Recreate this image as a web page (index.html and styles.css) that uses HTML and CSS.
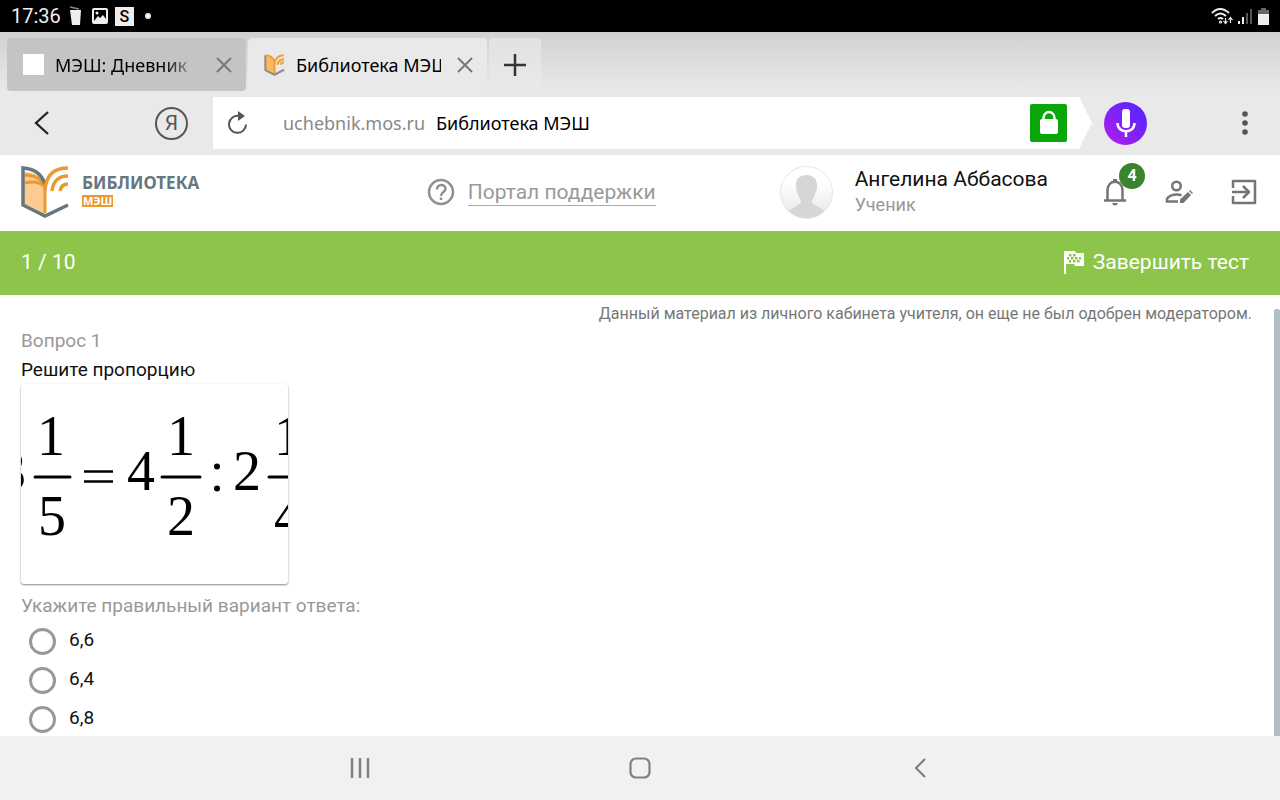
FILE: index.html
```html
<!DOCTYPE html>
<html lang="ru">
	<head>

		<meta charset="UTF-8">
		<meta name="viewport" content="width=device-width, initial-scale=1">
		<title>Библиотека МЭШ</title>

		<link rel="stylesheet" href="styles.css">

	</head>
	<body>

		<!-- status bar -->
		<div class="status">
			<span class="status-time">17:36</span>
			<svg class="status-cup" width="14" height="20" viewBox="0 0 14 20">
				<path d="M1 4 L12 4 L11 19 L3 19 Z" fill="#eee"/>
				<path d="M1 1 L10 3" stroke="#888" stroke-width="1.5"/>
			</svg>
			<svg class="status-picture" width="16" height="16" viewBox="0 0 16 16">
				<rect x="1" y="1" width="14" height="14" rx="1" fill="none" stroke="#eee" stroke-width="2"/>
				<path d="M2 13 L6 8 L8 10 L11 7 L14 11 V14 H2 Z" fill="#eee"/>
				<circle cx="5" cy="5" r="1.5" fill="#eee"/>
			</svg>
			<span class="status-s">S</span>
			<span class="status-dot"></span>
			<svg class="status-wifi" width="22" height="18" viewBox="0 0 22 18" fill="none" stroke="#eee" stroke-width="2">
				<path d="M1 6 Q9 -2 18 6"/>
				<path d="M4 9 Q9.500 4 15 9"/>
				<path d="M7 12 Q9.500 10 12 12"/>
				<circle cx="9.500" cy="15" r="0.600"/>
				<path d="M14.500 11 V16 M12.500 14 L14.500 16.500 L16.500 14 M19.500 16 V11 M17.500 13 L19.500 10.500 L21.500 13" stroke-width="1.200"/>
			</svg>
			<svg class="status-signal" width="15" height="16" viewBox="0 0 15 16">
				<path d="M1 13h2v3h-2z M5 9h2v7h-2z" fill="#eee"/>
				<path d="M9 5h2v11h-2z M13 1h2v15h-2z" fill="#555"/>
			</svg>
			<svg width="11" height="17" viewBox="0 0 11 17">
				<path d="M3 0h5v2h3v4H0V2h3z" fill="#666"/>
				<rect y="6" width="11" height="11" fill="#eee"/>
			</svg>
		</div>

		<!-- browser -->
		<div class="browser">
			<div class="tabs">
				<div class="tab">
					<span class="tab-icon"></span>
					<span class="tab-title tab-fade">МЭШ: Дневник</span>
					<button class="tab-close" aria-label="Закрыть">
						<svg width="16" height="16" viewBox="0 0 16 16"><path d="M1 1 L15 15 M15 1 L1 15" stroke="#777" stroke-width="2"/></svg>
					</button>
				</div>
				<div class="tab tab-active">
					<svg class="tab-logo" width="21" height="22" viewBox="0 0 48 53">
						<path d="M3 4 C14 6 20 10 24 19 V47 L3 38 Z" fill="#fdb95f"/>
						<path d="M2 3 V39 L24 50 L47 38" fill="none" stroke="#8f8f86" stroke-width="5"/>
						<path d="M2 3 C14 3 21 9 24 19 V46 M24 24 C26 10 34 3 47 3 M31 26 C33 17 38 13 47 13 M39 26 C40 22 43 20 47 20" fill="none" stroke="#f3a032" stroke-width="5"/>
					</svg>
					<span class="tab-title">Библиотека МЭШ</span>
					<button class="tab-close" aria-label="Закрыть">
						<svg width="16" height="16" viewBox="0 0 16 16"><path d="M1 1 L15 15 M15 1 L1 15" stroke="#777" stroke-width="2"/></svg>
					</button>
				</div>
				<button class="tab-new" aria-label="Новая вкладка">
					<svg width="22" height="22" viewBox="0 0 22 22"><path d="M11 0 V22 M0 11 H22" stroke="#333" stroke-width="2.500"/></svg>
				</button>
			</div>

			<div class="toolbar">
				<button class="back" aria-label="Назад">
					<svg width="16" height="24" viewBox="0 0 16 24"><path d="M14 1 L2 12 L14 23" fill="none" stroke="#222" stroke-width="2.300"/></svg>
				</button>
				<button class="yandex" aria-label="Яндекс">Я</button>
				<div class="address">
					<button class="reload" aria-label="Обновить">
						<svg width="20" height="24" viewBox="0 0 20 24">
							<path d="M11 5 A8.500 8.500 0 1 0 18 13.500" fill="none" stroke="#555" stroke-width="2"/>
							<path d="M10 0 L17 5 L10 10 Z" fill="#555"/>
						</svg>
					</button>
					<button class="url"><span class="url-host">uchebnik.mos.ru</span>Библиотека МЭШ</button>
					<button class="lock" aria-label="Защищено">
						<svg width="20" height="26" viewBox="0 0 20 26">
							<rect x="1" y="9" width="18" height="15" rx="2" fill="#fff"/>
							<path d="M4.500 10 V8 A5.500 6 0 0 1 15.500 8 V10" fill="none" stroke="#fff" stroke-width="2.500"/>
						</svg>
					</button>
				</div>
				<button class="mic" aria-label="Голосовой поиск">
					<svg width="20" height="30" viewBox="0 0 20 30">
						<rect x="6" y="1" width="8" height="19" rx="3" fill="#fff"/>
						<path d="M1.500 15 C1.500 26 18.500 26 18.500 15 M10 23 V29" fill="none" stroke="#fff" stroke-width="2.500"/>
					</svg>
				</button>
				<button class="more" aria-label="Меню">
					<svg width="6" height="26" viewBox="0 0 6 26" fill="#555"><circle cx="3" cy="4" r="2.800"/><circle cx="3" cy="13" r="2.800"/><circle cx="3" cy="22" r="2.800"/></svg>
				</button>
			</div>
		</div>

		<!-- site header -->
		<header class="header">
			<a class="logo" href="#">
				<svg width="48" height="53" viewBox="0 0 48 53">
					<path d="M3 6 C14 6 20 10 24 19 V48 L3 38 Z" fill="#fbcb92"/>
					<path d="M4 9 C13 9 20 12 24 20 M4 17 C12 15 19 16 24 21 V47" fill="none" stroke="#ec9830" stroke-width="3"/>
					<path d="M24 18 C20 7 13 3 2 2 V39 L24 50 L47 39" fill="none" stroke="#66777d" stroke-width="3.500"/>
					<path d="M24 24 C25 10 32 2 47 2 M31 25 C32 15 38 10 47 10 M39 25 C40 20 43 18 47 18" fill="none" stroke="#ec9830" stroke-width="3.500"/>
				</svg>
				<span class="logo-text">
					<span class="logo-name">БИБЛИОТЕКА</span>
					<span class="logo-badge">МЭШ</span>
				</span>
			</a>
			<a class="help" href="#">
				<svg width="28" height="28" viewBox="0 0 28 28" fill="none" stroke="#8f8f8f" stroke-width="2.500">
					<circle cx="14" cy="14" r="12"/>
					<path d="M10 11.500 C10 5.500 18.500 5.500 18.500 11 C18.500 14 14 14 14 18 M14 19.500 V22"/>
				</svg>
				<span class="help-text">Портал поддержки</span>
			</a>
			<div class="user">
				<svg class="avatar" width="53" height="53" viewBox="0 0 53 53">
					<defs>
						<clipPath id="round"><circle cx="26.500" cy="26.500" r="25.500"/></clipPath>
						<linearGradient id="shade" x1="0" y1="0" x2="0" y2="1">
							<stop offset="0.300" stop-color="#fff"/>
							<stop offset="1" stop-color="#e6e6e6"/>
						</linearGradient>
					</defs>
					<circle cx="26.500" cy="26.500" r="26" fill="url(#shade)" stroke="#e6e6e6"/>
					<path clip-path="url(#round)" d="M26.500 9 C19 9 15 14 16 22 C17 28 20 31 21 36 C20 40 11 41 8 46 L8 53 H45 V46 C42 41 33 40 32 36 C33 31 36 28 37 22 C38 14 34 9 26.500 9" fill="#d6d6d6"/>
				</svg>
				<div>
					<div class="user-name">Ангелина Аббасова</div>
					<div class="user-role">Ученик</div>
				</div>
			</div>
			<div class="actions">
				<button class="bell" aria-label="Уведомления">
					<svg width="24" height="28" viewBox="0 0 24 28" fill="none" stroke="#757575" stroke-width="2.500">
						<path d="M1 22.500 H23 M4.500 22 V12 C4.500 1 19.500 1 19.500 12 V22"/>
						<path d="M12 1 V4" stroke-width="4"/>
						<path d="M9 25 H15 Q14 27.500 12 27.500 Q10 27.500 9 25 Z" fill="#757575" stroke="none"/>
					</svg>
					<span class="bell-count">4</span>
				</button>
				<button aria-label="Профиль">
					<svg width="28" height="24" viewBox="0 0 28 24" fill="none" stroke="#757575" stroke-width="2.500">
						<circle cx="11.500" cy="6" r="4.300"/>
						<path d="M13 21.500 H2 V19 C3 16 8 14.500 12 14.500 C14 14.500 15.500 15 16.500 15.500"/>
						<path d="M15 23 V19.500 L23 12 L26 15 L18.500 23 Z M24 11 L25 10 L28 13 L27 14 Z" fill="#757575" stroke="none"/>
					</svg>
				</button>
				<button aria-label="Выход">
					<svg width="26" height="26" viewBox="0 0 26 26" fill="none" stroke="#757575" stroke-width="2.500">
						<path d="M2 9 V2 H24 V24 H2 V17 M1 13 H17 M12 7 L18 13 L12 19" stroke-linejoin="round"/>
					</svg>
				</button>
			</div>
		</header>

		<div class="test-bar">
			<span>1 / 10</span>
			<button class="finish">
				<svg width="22" height="24" viewBox="0 0 22 24">
					<path d="M1 1 H12 L13 3 H21 V16 H12 L11 14 H3 V24 H1 Z" fill="#fff"/>
					<path d="M6 4h2.500v2.500H6z M10 4h2.500v2.500H10z M4 7h2v2.500H4z M8 7h2.500v2.500H8z M12 7h2.500v2.500H12z M16 7h2v2.500h-2z M6 10h2v2.500H6z M10 10h2.500v2.500H10z M14 10h2.500v2.500H14z" fill="#8dc54b"/>
				</svg>
				Завершить тест
			</button>
		</div>

		<!-- question -->
		<div class="page">
			<main class="content">
				<p class="notice">Данный материал из личного кабинета учителя, он еще не был одобрен модератором.</p>
				<p class="question-number">Вопрос 1</p>
				<p class="question">Решите пропорцию</p>
				<div class="formula">
					<svg width="267" height="200" viewBox="0 0 267 200">
						<g class="digits">
							<text x="-9" y="106">3</text>
							<text x="30" y="71">1</text>
							<text x="31" y="151">5</text>
							<text x="120" y="106">4</text>
							<text x="160" y="71">1</text>
							<text x="160" y="151">2</text>
							<text x="226" y="106">2</text>
							<text x="267" y="71">1</text>
							<text x="267" y="151">4</text>
						</g>
						<path d="M14 93 H49 M141 93 H179 M248 93 H287" stroke="#000" stroke-width="3" stroke-linecap="round"/>
						<path d="M63 87.500 H92 M63 97.500 H92" stroke="#000" stroke-width="2.500"/>
						<circle cx="196" cy="82.500" r="3"/>
						<circle cx="196" cy="104.500" r="3"/>
					</svg>
				</div>
				<fieldset class="answers">
					<legend>Укажите правильный вариант ответа:</legend>
					<label class="answer"><input type="radio" name="answer"><span>6,6</span></label>
					<label class="answer"><input type="radio" name="answer"><span>6,4</span></label>
					<label class="answer"><input type="radio" name="answer"><span>6,8</span></label>
				</fieldset>
			</main>
			<div class="scroll"></div>
		</div>

		<!-- android buttons -->
		<nav class="nav">
			<button aria-label="Недавние">
				<svg width="20" height="20" viewBox="0 0 20 20"><path d="M2 1 V19 M10 1 V19 M18 1 V19" stroke="#808080" stroke-width="2.500" stroke-linecap="round"/></svg>
			</button>
			<button aria-label="Домой">
				<svg width="22" height="22" viewBox="0 0 22 22"><rect x="1.500" y="1.500" width="19" height="19" rx="5.500" fill="none" stroke="#808080" stroke-width="2.200"/></svg>
			</button>
			<button aria-label="Назад">
				<svg width="12" height="20" viewBox="0 0 12 20"><path d="M11 1 L2 10 L11 19" fill="none" stroke="#808080" stroke-width="2.200"/></svg>
			</button>
		</nav>

	</body>
</html>
```
FILE: styles.css
```css
/* all */
* {
	margin: 0;
	padding: 0;
	box-sizing: border-box;
}

body {
	display: flex;
	flex-direction: column;
	height: 100vh;
	overflow: hidden;
	background: #fff;
	color: #111;
	font-family: Roboto, sans-serif;
	font-size: 18px;
}

svg {
	display: block;
	flex: none;
}

button {
	display: flex;
	align-items: center;
	justify-content: center;
	flex: none;
	border: 0;
	background: none;
	color: inherit;
	font: inherit;
}

a {
	color: inherit;
	text-decoration: none;
}

/* status bar */
.status {
	display: flex;
	align-items: center;
	flex: none;
	height: 32px;
	padding: 0 11px;
	background: #000;
	color: #eee;
}

.status-time {
	font-size: 20px;
}

.status-cup {
	margin-left: 8px;
}

.status-picture {
	margin-left: 9px;
}

.status-s {
	width: 19px;
	margin-left: 7px;
	background: #eee;
	color: #000;
	font-size: 16px;
	font-weight: 500;
	line-height: 19px;
	text-align: center;
}

.status-dot {
	width: 6px;
	height: 6px;
	margin-left: 11px;
	border-radius: 50%;
	background: #eee;
}

.status-wifi {
	margin-left: auto;
}

.status-signal {
	margin: 0 6px 0 4px;
}

/* browser */
.browser {
	flex: none;
	background: linear-gradient(#d1d1d1, #e9e9e9 60px);
	font-family: "Noto Sans", sans-serif;
}

.tabs {
	display: flex;
	gap: 2px;
	height: 65px;
	padding: 6px 7px 0;
}

.tab {
	display: flex;
	align-items: center;
	width: 239px;
	height: 53px;
	padding: 0 14px 0 16px;
	border-radius: 4px;
	background: #c4c4c4;
}

.tab-active {
	height: 59px;
	padding-bottom: 6px;
	border-radius: 4px 4px 0 0;
	background: #e9e9e9;
}

.tab-icon {
	width: 21px;
	height: 21px;
	background: #fff;
}

.tab-title {
	flex: 1;
	margin-left: 11px;
	overflow: hidden;
	color: #000;
	white-space: nowrap;
}

.tab-fade {
	-webkit-mask-image: linear-gradient(90deg, #000 75%, transparent);
	mask-image: linear-gradient(90deg, #000 75%, transparent);
}

.tab-close {
	margin-left: 16px;
}

.tab-new {
	width: 52px;
	height: 53px;
	border-radius: 4px;
	background: linear-gradient(#e2e2e2, #e9e9e9);
}

.toolbar {
	display: flex;
	align-items: center;
	height: 58px;
	padding: 0 32px 6px 34px;
}

.yandex {
	width: 33px;
	height: 33px;
	margin: 0 25px 0 105px;
	border: 2px solid #555;
	border-radius: 50%;
	color: #555;
	font-family: Roboto, sans-serif;
	font-size: 21px;
}

.address {
	display: flex;
	align-items: center;
	flex: 1;
	height: 52px;
	padding: 0 25px 0 15px;
	background: #fff;
	clip-path: polygon(0 0, calc(100% - 13px) 0, 100% 50%, calc(100% - 13px) 100%, 0 100%);
}

.url {
	flex: 1;
	justify-content: flex-start;
	gap: 11px;
	padding-left: 35px;
	color: #000;
}

.url-host {
	color: #888;
}

.lock {
	width: 37px;
	height: 38px;
	border-radius: 2px;
	background: #0aa70a;
}

.mic {
	width: 43px;
	height: 43px;
	margin: 0 95px 0 12px;
	border-radius: 50%;
	background: linear-gradient(225deg, #4a26ff, #b61cf0);
}

/* site header */
.header {
	display: flex;
	align-items: center;
	flex: none;
	height: 76px;
	padding: 0 23px 2px 21px;
}

.logo {
	display: flex;
	align-items: center;
	flex: 1;
	gap: 13px;
}

.logo-text {
	display: flex;
	flex-direction: column;
	align-items: flex-start;
	padding-bottom: 6px;
}

.logo-name {
	color: #66777d;
	font-family: "Noto Sans", sans-serif;
	font-size: 17px;
	font-weight: bold;
	line-height: 24px;
}

.logo-badge {
	padding: 0 1px;
	background: #e8992f;
	color: #fff;
	font-family: "Noto Sans", sans-serif;
	font-size: 11px;
	font-weight: bold;
	line-height: 12px;
}

.help {
	display: flex;
	align-items: center;
	gap: 13px;
	margin-right: 124px;
	color: #999;
	font-size: 21px;
}

.help-text {
	border-bottom: 1px solid #aaa;
	line-height: 26px;
}

.user {
	display: flex;
	align-items: center;
	gap: 22px;
}

.user-name {
	font-size: 21px;
	line-height: 26px;
}

.user-role {
	color: #999;
	line-height: 26px;
}

.actions {
	display: flex;
	align-items: center;
	gap: 38px;
	margin-left: 55px;
}

.bell {
	position: relative;
}

.bell-count {
	position: absolute;
	left: 16px;
	bottom: 17px;
	width: 26px;
	border-radius: 50%;
	background: #3b832f;
	color: #fff;
	font-size: 16px;
	font-weight: bold;
	line-height: 26px;
}

.test-bar {
	display: flex;
	align-items: center;
	justify-content: space-between;
	flex: none;
	height: 64px;
	padding: 0 31px 3px 21px;
	background: #8dc54b;
	color: #fff;
	font-size: 21px;
}

.finish {
	gap: 8px;
}

/* question */
.page {
	display: flex;
	flex: 1;
	min-height: 0;
	overflow: hidden;
}

.content {
	flex: 1;
	padding: 7px 22px 0 21px;
	font-size: 19px;
}

.scroll {
	width: 6px;
	margin-top: 14px;
	border-radius: 2px 2px 0 0;
	background: #b0bec5;
}

.notice {
	color: #777;
	font-size: 16px;
	line-height: 24px;
	text-align: right;
}

.question-number {
	color: #999;
	line-height: 30px;
}

.question {
	line-height: 28px;
}

.formula {
	width: 267px;
	height: 200px;
	overflow: hidden;
	border-radius: 3px;
	box-shadow: 0 1px 2px #888;
}

.digits {
	font-family: "Liberation Serif", serif;
	font-size: 56px;
	text-anchor: middle;
}

.answers {
	border: 0;
}

.answers legend {
	padding-top: 5px;
	color: #999;
	line-height: 33px;
}

.answer {
	display: flex;
	gap: 13px;
	width: 120px;
	height: 39px;
	padding: 6px 0 0 8px;
	line-height: 24px;
}

.answer input {
	appearance: none;
	width: 27px;
	height: 27px;
	border: 3px solid #999;
	border-radius: 50%;
}

.answer input:checked {
	border-width: 8px;
}

/* android buttons */
.nav {
	display: flex;
	align-items: center;
	justify-content: center;
	flex: none;
	gap: 200px;
	height: 64px;
	background: #f1f1f1;
}

.nav button {
	width: 80px;
	height: 64px;
}
```
